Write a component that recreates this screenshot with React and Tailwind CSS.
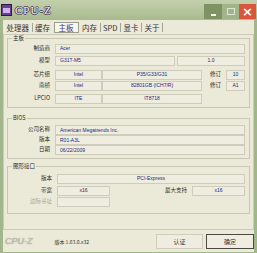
import React from "react";

const F = "font-['Noto_Sans_CJK_SC','Noto_Sans',sans-serif]";
const V = "font-['Liberation_Sans',Arial,sans-serif]";

function Field({ className = "", children, center = false }) {
  return (
    <div
      className={`h-[10px] border border-[#cfccb9] bg-[#efede0] flex items-center ${center ? "justify-center" : "pl-[4px]"} text-[5px] leading-none text-[#25257a] ${V} ${className}`}
    >
      {children}
    </div>
  );
}

function Label({ w = "w-[47px]", children, grey = false }) {
  return (
    <div className={`${w} shrink-0 text-right pr-[5px] text-[5.5px] leading-none ${grey ? "text-[#a9a79a]" : "text-[#2a2a2a]"} ${F}`}>
      {children}
    </div>
  );
}

function Group({ title, className = "", children }) {
  return (
    <fieldset className={`border border-[#c9c6b3] mx-[3px] px-[0px] ${className}`}>
      <legend className={`ml-[4px] px-[1px] text-[5.5px] leading-none text-[#2a2a2a] ${F}`}>{title}</legend>
      {children}
    </fieldset>
  );
}

export default function App() {
  const tabs = ["处理器", "缓存", "主板", "内存", "SPD", "显卡", "关于"];
  return (
    <div className="w-[257px] h-[253px] bg-[#a3b58b] flex flex-col overflow-hidden">
      {/* title bar */}
      <div className="h-[20px] shrink-0 flex items-center bg-gradient-to-b from-[#c4d0ad] to-[#a9ba8e] pl-[1px]">
        <div className="w-[11px] h-[12px] bg-[#6a3f9a] border border-[#2d1a44] flex items-center justify-center">
          <div className="w-[7px] h-[5px] bg-[#c9b6e6]" />
        </div>
        <div className="ml-[3px] text-[11px] leading-none text-[#f3eefa] font-['Liberation_Serif',serif] tracking-[1px] [text-shadow:1px_0_0_#4a3a66,-1px_0_0_#4a3a66,0_1px_0_#4a3a66,0_-1px_0_#4a3a66]">
          CPU-Z
        </div>
        <div className="flex-1" />
        <div className="flex items-center h-[15px] mt-[2px] mr-[1px]">
          <div className="w-[18px] h-[15px] bg-[#7f9263] flex items-end justify-center pb-[3px]">
            <div className="w-[5px] h-[2px] bg-[#f4f6ee]" />
          </div>
          <div className="w-[17px] h-[15px] bg-[#a2b489] flex items-center justify-center">
            <div className="w-[8px] h-[7px] border border-[#dfe6d3]" />
          </div>
          <div className="w-[17px] h-[15px] bg-[#d9563c] flex items-center justify-center text-white text-[13px] font-bold leading-none font-['DejaVu_Sans',sans-serif]">
            ×
          </div>
        </div>
      </div>

      {/* body */}
      <div className="flex-1 mx-[3px] mb-[1px] bg-[#ebe9d8] flex flex-col">
        {/* tabs */}
        <div className={`h-[14px] shrink-0 flex items-end pb-[1px] pl-[1px] text-[7.5px] leading-none text-[#333] ${F}`}>
          {tabs.map((t, i) => (
            <div key={t} className="flex items-center">
              <div
                className={
                  t === "主板"
                    ? "px-[4px] h-[11px] flex items-center bg-[#f6f5ee] border border-[#9f9d8c] text-[#3a3a8a] mx-[1px]"
                    : "px-[2.5px] h-[11px] flex items-center"
                }
              >
                {t}
              </div>
              {t !== "主板" && tabs[i + 1] !== "主板" && <div className="w-[1px] h-[9px] bg-[#a5a393]" />}
            </div>
          ))}
        </div>

        {/* panel */}
        <div className="h-[196px] shrink-0 border border-[#cdcab8] pt-[1px] flex flex-col">
          <Group title="主板" className="pb-[3px]">
            <div className="flex items-center mt-[2px]">
              <Label>制造商</Label>
              <Field className="w-[190px]">Acer</Field>
            </div>
            <div className="flex items-center mt-[2px]">
              <Label>模型</Label>
              <Field className="w-[120px]">G31T-M5</Field>
              <Field className="w-[68px] ml-[2px]" center>1.0</Field>
            </div>
            <div className="flex items-center mt-[4px]">
              <Label>芯片组</Label>
              <Field className="w-[47px]" center>Intel</Field>
              <Field className="w-[100px]" center>P35/G33/G31</Field>
              <Label w="w-[24px]">修订</Label>
              <Field className="w-[19px]" center>10</Field>
            </div>
            <div className="flex items-center mt-[1px]">
              <Label>南桥</Label>
              <Field className="w-[47px]" center>Intel</Field>
              <Field className="w-[100px]" center>82801GB (ICH7/R)</Field>
              <Label w="w-[24px]">修订</Label>
              <Field className="w-[19px]" center>A1</Field>
            </div>
            <div className="flex items-center mt-[3px]">
              <Label>LPCIO</Label>
              <Field className="w-[47px]" center>ITE</Field>
              <Field className="w-[100px]" center>IT8718</Field>
            </div>
          </Group>

          <Group title="BIOS" className="mt-[8px] pb-[3px]">
            <div className="flex items-center mt-[4px]">
              <Label>公司名称</Label>
              <Field className="w-[190px]">American Megatrends Inc.</Field>
            </div>
            <div className="flex items-center">
              <Label>版本</Label>
              <Field className="w-[190px]">R01-A3L</Field>
            </div>
            <div className="flex items-center">
              <Label>日期</Label>
              <Field className="w-[190px]">06/22/2009</Field>
            </div>
          </Group>

          <Group title="图形接口" className="mt-[5px] pb-[6px]">
            <div className="flex items-center mt-[4px] pl-[2px]">
              <Label>版本</Label>
              <Field className="w-[188px]" center>PCI-Express</Field>
            </div>
            <div className="flex items-center mt-[2px] pl-[2px]">
              <Label>带宽</Label>
              <Field className="w-[53px]" center>x16</Field>
              <Label w="w-[82px]">最大支持</Label>
              <Field className="w-[53px]" center>x16</Field>
            </div>
            <div className="flex items-center mt-[1px] pl-[2px]">
              <Label grey>边际寻址</Label>
              <Field className="w-[53px]" />
            </div>
          </Group>
        </div>

        {/* bottom */}
        <div className="flex-1 flex items-center pl-[2px] pr-[0px]">
          <div className="text-[9px] italic leading-none text-[#c3c1b3] font-['Liberation_Sans',Arial,sans-serif] [text-shadow:0_0_1px_#8d8b7e]">
            CPU-Z
          </div>
          <div className={`ml-[22px] text-[5px] leading-none text-[#333] ${F}`}>版本 1.63.0.x32</div>
          <div className="flex-1" />
          <div className={`w-[47px] h-[15px] border border-[#d0cdbd] bg-[#efede2] flex items-center justify-center text-[6px] text-[#333] ${F}`}>
            认证
          </div>
          <div className={`ml-[3px] w-[48px] h-[15px] border border-[#4b4a42] bg-[#efede2] flex items-center justify-center text-[6px] text-[#333] ${F}`}>
            确定
          </div>
        </div>
      </div>
    </div>
  );
}
